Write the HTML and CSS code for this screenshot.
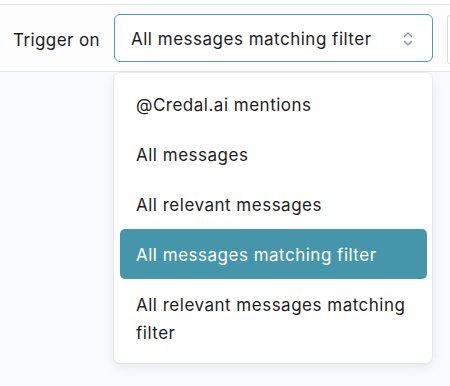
FILE: index.html
```html
<!DOCTYPE html>
<html lang="en">
<head>
    <meta charset="UTF-8">
    <meta name="viewport" content="width=device-width, initial-scale=1.0">
    <title>Trigger settings</title>
    <link rel="stylesheet" href="styles.css">
</head>
<body>
    <div class="top-strip"></div>
    <section class="trigger-row">
        <label class="trigger-label" for="trigger-select">Trigger on</label>
        <div class="select-wrap">
            <div class="select-box" id="trigger-select">
                <span>All messages matching filter</span>
                <svg class="chevrons" width="12" height="16" viewBox="0 0 12 16" fill="none" stroke="#8a8f98" stroke-width="1.4" stroke-linecap="round" stroke-linejoin="round">
                    <path d="M2.5 5.5 L6 2 L9.5 5.5"/>
                    <path d="M2.5 10.5 L6 14 L9.5 10.5"/>
                </svg>
            </div>
            <!-- open options menu -->
            <ul class="options">
                <li class="option">@Credal.ai mentions</li>
                <li class="option">All messages</li>
                <li class="option">All relevant messages</li>
                <li class="option selected">All messages matching filter</li>
                <li class="option">All relevant messages matching filter</li>
            </ul>
        </div>
        <div class="next-box"></div>
    </section>
</body>
</html>
```

FILE: styles.css
```css
html, body {
    margin: 0;
    padding: 0;
}

body {
    background: #f9fafb;
    font-family: Inter, "Noto Sans", sans-serif;
    color: #1c1c1e;
    overflow: hidden;
    height: 386px;
}

.top-strip {
    height: 4px;
    background: #ffffff;
    border-bottom: 1px solid #e3e5e8;
}

.trigger-row {
    display: flex;
    align-items: flex-start;
    height: 67px;
    box-sizing: border-box;
    padding: 9px 0 0 13px;
    background: #fdfdfd;
    border-bottom: 1px solid #e3e5e8;
}

.trigger-label {
    width: 101px;
    flex-shrink: 0;
    padding-top: 2px;
    font-size: 17px;
    letter-spacing: 0.4px;
    line-height: 48px;
}

.select-wrap {
    position: relative;
    flex-shrink: 0;
}

.select-box {
    display: flex;
    align-items: center;
    justify-content: space-between;
    box-sizing: border-box;
    width: 319px;
    height: 48px;
    padding: 1px 18px 0 16px;
    background: #ffffff;
    border: 1px solid #4a9fb6;
    border-radius: 6px;
    font-size: 17px;
    letter-spacing: 0.5px;
}

.chevrons {
    display: block;
}

.next-box {
    flex-shrink: 0;
    margin-left: 14px;
    margin-top: 1px;
    width: 2px;
    height: 47px;
    background: #ffffff;
    border: 1px solid #d9dce0;
    border-right: none;
    border-radius: 6px 0 0 6px;
}

/* dropdown menu */
.options {
    position: absolute;
    top: 59px;
    left: 0;
    width: 318px;
    box-sizing: border-box;
    margin: 0;
    padding: 6px 5px 6px 6px;
    list-style: none;
    background: #ffffff;
    border-radius: 6px;
    box-shadow: 0 0 0 1px rgba(0, 0, 0, 0.04), 0 4px 12px rgba(0, 0, 0, 0.08);
    z-index: 10;
}

.option {
    padding: 12px 16px 10px;
    font-size: 17px;
    letter-spacing: 0.5px;
    line-height: 28px;
    border-radius: 5px;
}

.option.selected {
    background: #4596ab;
    color: #ffffff;
}
```
